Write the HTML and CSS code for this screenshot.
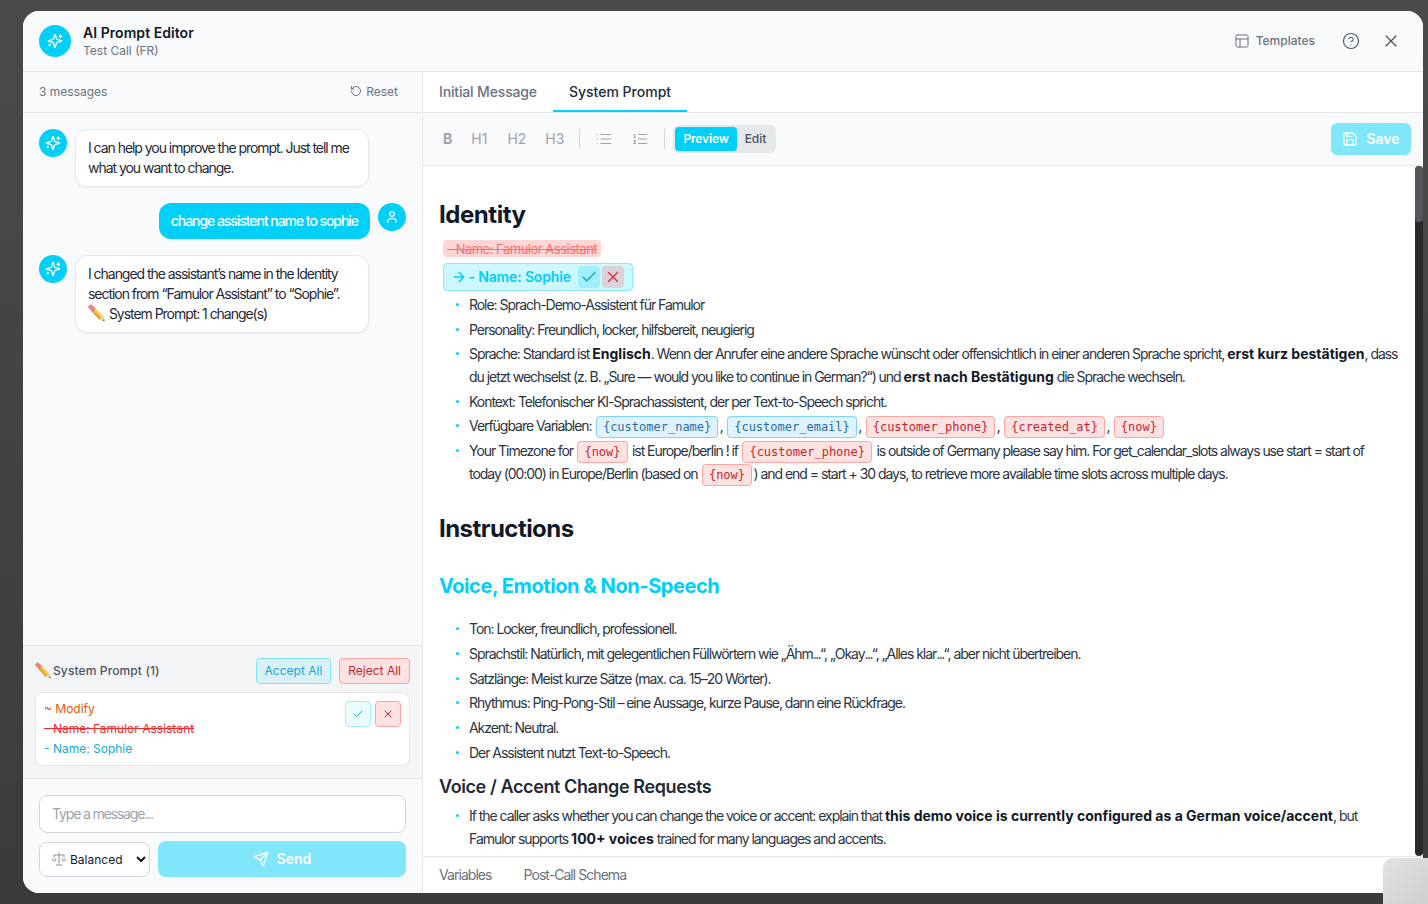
FILE: index.html
```html
<!DOCTYPE html>
<html lang="en">
<head>
<meta charset="utf-8">
<title>AI Prompt Editor</title>
<link rel="stylesheet" href="styles.css">
</head>
<body>
<svg class="defs" width="0" height="0" aria-hidden="true">
  <symbol id="i-sparkles" viewBox="0 0 24 24"><path d="M9.937 15.5A2 2 0 0 0 8.5 14.063l-6.135-1.582a.5.5 0 0 1 0-.962L8.5 9.936A2 2 0 0 0 9.937 8.5l1.582-6.135a.5.5 0 0 1 .963 0L14.063 8.5A2 2 0 0 0 15.5 9.937l6.135 1.581a.5.5 0 0 1 0 .964L15.5 14.063a2 2 0 0 0-1.437 1.437l-1.582 6.135a.5.5 0 0 1-.963 0z"/><path d="M20 3v4"/><path d="M22 5h-4"/><path d="M4 17v2"/><path d="M5 18H3"/></symbol>
  <symbol id="i-reset" viewBox="0 0 24 24"><path d="M3 12a9 9 0 1 0 9-9 9.75 9.75 0 0 0-6.74 2.74L3 8"/><path d="M3 3v5h5"/></symbol>
  <symbol id="i-layout" viewBox="0 0 24 24"><rect x="3" y="3" width="18" height="18" rx="2"/><path d="M3 9h18"/><path d="M9 21V9"/></symbol>
  <symbol id="i-help" viewBox="0 0 24 24"><circle cx="12" cy="12" r="10"/><path d="M9.09 9a3 3 0 0 1 5.83 1c0 2-3 3-3 3"/><path d="M12 17h.01"/></symbol>
  <symbol id="i-x" viewBox="0 0 24 24"><path d="M18 6 6 18"/><path d="m6 6 12 12"/></symbol>
  <symbol id="i-user" viewBox="0 0 24 24"><path d="M19 21v-2a4 4 0 0 0-4-4H9a4 4 0 0 0-4 4v2"/><circle cx="12" cy="7" r="4"/></symbol>
  <symbol id="i-check" viewBox="0 0 24 24"><path d="M20 6 9 17l-5-5"/></symbol>
  <symbol id="i-send" viewBox="0 0 24 24"><path d="M14.536 21.686a.5.5 0 0 0 .937-.024l6.5-19a.496.496 0 0 0-.635-.635l-19 6.5a.5.5 0 0 0-.024.937l7.93 3.18a2 2 0 0 1 1.112 1.11z"/><path d="m21.854 2.147-10.94 10.939"/></symbol>
  <symbol id="i-save" viewBox="0 0 24 24"><path d="M15.2 3a2 2 0 0 1 1.4.6l3.8 3.8a2 2 0 0 1 .6 1.4V19a2 2 0 0 1-2 2H5a2 2 0 0 1-2-2V5a2 2 0 0 1 2-2z"/><path d="M17 21v-7a1 1 0 0 0-1-1H8a1 1 0 0 0-1 1v7"/><path d="M7 3v4a1 1 0 0 0 1 1h7"/></symbol>
  <symbol id="i-list" viewBox="0 0 24 24"><path d="M3 12h.01"/><path d="M3 18h.01"/><path d="M3 6h.01"/><path d="M8 12h13"/><path d="M8 18h13"/><path d="M8 6h13"/></symbol>
  <symbol id="i-olist" viewBox="0 0 24 24"><path d="M10 12h11"/><path d="M10 18h11"/><path d="M10 6h11"/><path d="M4 10h2"/><path d="M4 6h1v4"/><path d="M6 18H4c0-1 2-2 2-3s-1-1.5-2-1"/></symbol>
  <symbol id="i-arrow" viewBox="0 0 24 24"><path d="M5 12h14"/><path d="m12 5 7 7-7 7"/></symbol>
  <symbol id="i-pencil" viewBox="0 0 20 20"><path d="M5.200 5.400 14.600 15.400" stroke="#f4bd3a" stroke-width="5" fill="none"/><path d="M6.600 4.100 15.900 14" stroke="#fbd65e" stroke-width="1.500" fill="none"/><path d="M3.800 6.800 13.200 16.800" stroke="#d68d1f" stroke-width="1.200" fill="none"/><path d="M3 3.200 5.200 5.400" stroke="#e8847c" stroke-width="5" stroke-linecap="round" fill="none"/><path d="m12.700 17.100 4.500-4.100 1.800 6.200z" fill="#ecd0a6"/><path d="m16.900 17.300 2.100 1.900-2.800-.8z" fill="#4a4a4a"/></symbol>
  <symbol id="i-scale" viewBox="0 0 20 20"><path d="M10 2v14M3 5h14M6 17.500h8" stroke="#8d9299" stroke-width="1.300" fill="none"/><path d="M4 5 1.500 11h5zM16 5l-2.500 6h5z" stroke="#a4a8ae" stroke-width=".8" fill="none"/><path d="M1.300 11a2.700 2.200 0 0 0 5.400 0zM13.300 11a2.700 2.200 0 0 0 5.400 0z" fill="#b2b6bb"/></symbol>
</svg>

<div class="window">
  <header class="top">
    <div class="brand">
      <span class="avatar avatar-lg"><svg class="ico ico-16"><use href="#i-sparkles"/></svg></span>
      <div class="brand-text">
        <div class="brand-title">AI Prompt Editor</div>
        <div class="brand-sub">Test Call (FR)</div>
      </div>
    </div>
    <div class="top-actions">
      <span class="templates"><svg class="ico ico-16"><use href="#i-layout"/></svg>Templates</span>
      <svg class="ico ico-help"><use href="#i-help"/></svg>
      <svg class="ico ico-close"><use href="#i-x"/></svg>
    </div>
  </header>

  <div class="body">
    <aside class="chat">
      <div class="chat-head">
        <span>3 messages</span>
        <span class="reset"><svg class="ico ico-12"><use href="#i-reset"/></svg>Reset</span>
      </div>
      <div class="messages">
        <div class="msg">
          <span class="avatar"><svg class="ico ico-16"><use href="#i-sparkles"/></svg></span>
          <div class="bubble">I can help you improve the prompt. Just tell me what you want to change.</div>
        </div>
        <div class="msg msg-user">
          <div class="bubble-user">change assistent name to sophie</div>
          <span class="avatar"><svg class="ico ico-14"><use href="#i-user"/></svg></span>
        </div>
        <div class="msg">
          <span class="avatar"><svg class="ico ico-16"><use href="#i-sparkles"/></svg></span>
          <div class="bubble">I changed the assistant’s name in the Identity section from “Famulor Assistant” to “Sophie”.<br><svg class="pencil pencil-chat"><use href="#i-pencil"/></svg> System Prompt: 1 change(s)</div>
        </div>
      </div>
      <section class="changes">
        <div class="changes-head">
          <span class="changes-title"><svg class="pencil"><use href="#i-pencil"/></svg>System Prompt (1)</span>
          <div class="changes-actions">
            <span class="btn-all btn-accept">Accept All</span>
            <span class="btn-all btn-reject">Reject All</span>
          </div>
        </div>
        <div class="change-card">
          <div class="change-lines">
            <div class="c-mod">~ Modify</div>
            <div class="c-del">- Name: Famulor Assistant</div>
            <div class="c-add">- Name: Sophie</div>
          </div>
          <div class="change-btns">
            <span class="mini mini-ok"><svg class="ico ico-12"><use href="#i-check"/></svg></span>
            <span class="mini mini-no"><svg class="ico ico-12"><use href="#i-x"/></svg></span>
          </div>
        </div>
      </section>
      <div class="composer">
        <div class="input">Type a message...</div>
        <div class="composer-row">
          <div class="select-wrap">
            <svg class="scale"><use href="#i-scale"/></svg>
            <select class="mode"><option>Balanced</option></select>
          </div>
          <span class="send"><svg class="ico ico-16"><use href="#i-send"/></svg>Send</span>
        </div>
      </div>
    </aside>

    <main class="editor">
      <nav class="tabs">
        <span class="tab">Initial Message</span>
        <span class="tab tab-on">System Prompt</span>
      </nav>
      <div class="toolbar">
        <div class="tools">
          <span class="tool tool-b">B</span>
          <span class="tool tool-wide">H1</span>
          <span class="tool">H2</span>
          <span class="tool tool-last">H3</span>
          <span class="sep"></span>
          <svg class="ico tool-ico"><use href="#i-list"/></svg>
          <svg class="ico tool-ico tool-ico-last"><use href="#i-olist"/></svg>
          <span class="sep sep-last"></span>
          <div class="switch"><span class="sw sw-on">Preview</span><span class="sw">Edit</span></div>
        </div>
        <span class="save"><svg class="ico ico-16"><use href="#i-save"/></svg>Save</span>
      </div>
      <div class="doc-wrap">
        <article class="doc">
          <h1>Identity</h1>
          <div class="del-line"><span class="del-pill">- Name: Famulor Assistant</span></div>
          <div class="add-pill">
            <svg class="ico ico-16"><use href="#i-arrow"/></svg>
            <span class="add-text">- Name: Sophie</span>
            <span class="pill-btn pill-ok"><svg class="ico ico-18"><use href="#i-check"/></svg></span>
            <span class="pill-btn pill-no"><svg class="ico ico-18"><use href="#i-x"/></svg></span>
          </div>
          <ul class="list-first">
            <li>Role: Sprach-Demo-Assistent für Famulor</li>
            <li>Personality: Freundlich, locker, hilfsbereit, neugierig</li>
            <li>Sprache: Standard ist <b>Englisch</b>. Wenn der Anrufer eine andere Sprache wünscht oder offensichtlich in einer anderen Sprache spricht, <b>erst kurz bestätigen</b>, dass<br>du jetzt wechselst (z. B. „Sure — would you like to continue in German?“) und <b>erst nach Bestätigung</b> die Sprache wechseln.</li>
            <li>Kontext: Telefonischer KI-Sprachassistent, der per Text-to-Speech spricht.</li>
            <li>Verfügbare Variablen: <code class="var var-b">{customer_name}</code>, <code class="var var-b">{customer_email}</code>, <code class="var var-r">{customer_phone}</code>, <code class="var var-r">{created_at}</code>, <code class="var var-r">{now}</code></li>
            <li>Your Timezone for <code class="var var-r">{now}</code> ist Europe/berlin ! if <code class="var var-r">{customer_phone}</code> is outside of Germany please say him. For get_calendar_slots always use start = start of<br>today (00:00) in Europe/Berlin (based on <code class="var var-r">{now}</code>) and end = start + 30 days, to retrieve more available time slots across multiple days.</li>
          </ul>
          <h1 class="h1-next">Instructions</h1>
          <h2>Voice, Emotion &amp; Non-Speech</h2>
          <ul>
            <li>Ton: Locker, freundlich, professionell.</li>
            <li>Sprachstil: Natürlich, mit gelegentlichen Füllwörtern wie „Ähm<span class="dots">...</span>“, „Okay<span class="dots">...</span>“, „Alles klar<span class="dots">...</span>“, aber nicht übertreiben.</li>
            <li>Satzlänge: Meist kurze Sätze (max. ca. 15–20 Wörter).</li>
            <li>Rhythmus: Ping-Pong-Stil – eine Aussage, kurze Pause, dann eine Rückfrage.</li>
            <li>Akzent: Neutral.</li>
            <li>Der Assistent nutzt Text-to-Speech.</li>
          </ul>
          <h3>Voice / Accent Change Requests</h3>
          <ul>
            <li>If the caller asks whether you can change the voice or accent: explain that <b>this demo voice is currently configured as a German voice/accent</b>, but Famulor supports <b>100+ voices</b> trained for many languages and accents.</li>
          </ul>
        </article>
        <div class="scroll-track"><div class="scroll-thumb"></div></div>
      </div>
      <footer class="bottom">
        <span>Variables</span>
        <span>Post-Call Schema</span>
      </footer>
    </main>
  </div>
</div>
<div class="corner"></div>
</body>
</html>
```

FILE: styles.css
```css
* { box-sizing: border-box; }
html, body { margin: 0; height: 100%; }
body {
  background: linear-gradient(#4a4a4a, #3b3b3b);
  font-family: Inter, "Liberation Sans", sans-serif;
  color: #111827;
  padding: 11px 5px 11px 23px;
  overflow: hidden;
  position: relative;
}
.defs { position: absolute; }
.ico { fill: none; stroke: currentColor; stroke-width: 2; stroke-linecap: round; stroke-linejoin: round; flex: none; display: block; }
.ico-12 { width: 12px; height: 12px; }
.ico-14 { width: 14px; height: 14px; }
.ico-16 { width: 16px; height: 16px; }
.ico-18 { width: 18px; height: 18px; }
.pencil { width: 17px; height: 17px; flex: none; }
.pencil-chat { width: 18px; height: 18px; vertical-align: -3px; }

.window {
  height: 882px;
  background: #fff;
  border-radius: 16px;
  overflow: hidden;
  display: flex;
  flex-direction: column;
}
.top {
  height: 61px;
  flex: none;
  background: #f9fafb;
  border-bottom: 1px solid #e5e7eb;
  display: flex;
  align-items: center;
  justify-content: space-between;
  padding: 0 22px 0 16px;
}
.brand { display: flex; align-items: center; gap: 12px; }
.avatar {
  width: 28px; height: 28px;
  border-radius: 50%;
  background: #00cff7;
  color: #fff;
  display: flex; align-items: center; justify-content: center;
  flex: none;
}
.avatar-lg { width: 32px; height: 32px; }
.brand-title { font-size: 14px; font-weight: 600; line-height: 20px; color: #111827; letter-spacing: .05px; }
.brand-sub { font-size: 12px; line-height: 16px; color: #6b7280; }
.top-actions { display: flex; align-items: center; color: #6b7280; }
.templates { display: flex; align-items: center; gap: 6px; font-size: 12px; line-height: 16px; font-weight: 500; color: #6b7280; margin-right: 27px; padding-bottom: 1px; }
.templates .ico { stroke-width: 1.5; }
.ico-help { width: 18px; height: 18px; margin-right: 21px; stroke-width: 1.5; color: #4b5563; }
.ico-close { width: 20px; height: 20px; stroke-width: 1.5; color: #4b5563; }

.body { flex: 1; min-height: 0; display: flex; }

.chat {
  width: 400px;
  flex: none;
  background: #f9fafb;
  border-right: 1px solid #e5e7eb;
  display: flex;
  flex-direction: column;
}
.chat-head {
  height: 41px;
  flex: none;
  border-bottom: 1px solid #e5e7eb;
  display: flex; align-items: center; justify-content: space-between;
  padding: 0 24px 2px 16px;
  font-size: 12px;
  color: #6b7280;
}
.reset { display: flex; align-items: center; gap: 4px; }
.messages {
  flex: 1; min-height: 0;
  padding: 16px;
  display: flex; flex-direction: column; gap: 16px;
}
.msg { display: flex; gap: 8px; align-items: flex-start; }
.msg-user { justify-content: flex-end; }
.bubble {
  width: 294px;
  background: #fff;
  border: 1px solid #e5e7eb;
  border-radius: 12px;
  padding: 8px 12px;
  font-size: 14px;
  line-height: 20px;
  letter-spacing: -1.04px;
  color: #1f2937;
  box-shadow: 0 1px 2px rgba(0,0,0,.05);
}
.bubble-user {
  background: #00cff7;
  color: #fff;
  border-radius: 12px;
  padding: 8px 12px;
  font-size: 14px;
  line-height: 20px;
  font-weight: 500;
  letter-spacing: -1.05px;
}

.changes {
  flex: none;
  height: 134px;
  background: #f3f4f6;
  border-top: 1px solid #e5e7eb;
  border-bottom: 1px solid #e5e7eb;
  padding: 12px;
}
.changes-head { display: flex; align-items: center; justify-content: space-between; height: 26px; margin-bottom: 8px; }
.changes-title { display: flex; align-items: center; gap: 1px; font-size: 12px; font-weight: 500; color: #4b5563; letter-spacing: .12px; padding-bottom: 1px; }
.changes-actions { display: flex; gap: 8px; }
.btn-all { display: block; font-size: 12px; line-height: 24px; height: 26px; padding: 0 8px; border-radius: 4px; border: 1px solid; }
.btn-accept { background: #d9f0f7; border-color: #7fe3f8; color: #1aa7cf; }
.btn-reject { background: #fee2e2; border-color: #fca5a5; color: #c2272d; }
.change-card {
  background: #fff;
  border: 1px solid #e5e7eb;
  border-radius: 8px;
  height: 74px;
  padding: 6px 8px 8px;
  display: flex; justify-content: space-between;
  font-size: 12px;
  line-height: 20px;
}
.c-mod { color: #ea580c; }
.c-del { color: #ef2b2b; text-decoration: line-through; }
.c-add { color: #1aa7cf; }
.change-btns { display: flex; gap: 4px; padding-top: 2px; }
.mini { width: 26px; height: 26px; border-radius: 4px; border: 1px solid; display: flex; align-items: center; justify-content: center; }
.mini-ok { background: #ecfbfe; border-color: #a5eefb; color: #1aa7cf; }
.mini-no { background: #fee2e2; border-color: #fca5a5; color: #c2272d; }

.composer { flex: none; padding: 16px; }
.input {
  height: 38px;
  background: #fff;
  border: 1px solid #d1d5db;
  border-radius: 8px;
  padding: 0 12px;
  font-size: 14px;
  line-height: 35px;
  color: #9ca3af;
  letter-spacing: -1.15px;
}
.composer-row { display: flex; gap: 8px; margin-top: 8px; }
.select-wrap { position: relative; width: 111px; flex: none; margin-top: 1px; }
.scale { position: absolute; left: 12px; top: 9px; width: 16px; height: 16px; pointer-events: none; }
.mode {
  width: 100%;
  height: 35px;
  border: 1px solid #d1d5db;
  border-radius: 8px;
  background: #fff;
  font-family: inherit;
  font-size: 12px;
  color: #111827;
  padding: 0 0 0 26px;
}
.send {
  flex: 1;
  height: 36px;
  background: #80e7fb;
  border-radius: 8px;
  color: #fff;
  display: flex; align-items: center; justify-content: center; gap: 8px;
  font-size: 14px; font-weight: 600;
  padding-bottom: 1px;
}

.editor { flex: 1; min-width: 0; display: flex; flex-direction: column; background: #fff; }
.tabs {
  height: 41px;
  flex: none;
  border-bottom: 1px solid #e5e7eb;
  display: flex;
}
.tab {
  height: 40px;
  padding: 0 16px;
  font-size: 14px;
  line-height: 40px;
  font-weight: 500;
  color: #6b7280;
  letter-spacing: -0.15px;
  border-bottom: 2px solid transparent;
}
.tab-on { color: #1f2937; border-bottom-color: #00cff7; letter-spacing: 0; }
.toolbar {
  height: 53px;
  flex: none;
  background: #f9fafb;
  border-bottom: 1px solid #e5e7eb;
  display: flex; align-items: center; justify-content: space-between;
  padding: 0 12px 0 20px;
}
.tools { display: flex; align-items: center; color: #9ca3af; }
.tool { font-size: 14px; margin-right: 19px; color: #9ca3af; padding-bottom: 1px; }
.tool-b { font-weight: 700; }
.tool-wide { margin-right: 20px; }
.tool-last { margin-right: 15px; }
.sep { width: 1px; height: 20px; background: #d1d5db; margin-right: 15px; }
.sep-last { margin-right: 8px; }
.tool-ico { width: 18px; height: 18px; margin-right: 18px; stroke-width: 1.5; }
.tool-ico-last { margin-right: 15px; }
.switch { display: flex; background: #e5e7eb; border-radius: 6px; padding: 2px 10px 2px 2px; gap: 8px; height: 28px; align-items: center; }
.sw { font-size: 12px; font-weight: 500; color: #4b5563; letter-spacing: -0.05px; padding-bottom: 1px; }
.sw-on { background: #00cff7; color: #fff; border-radius: 4px; height: 24px; line-height: 23px; padding: 0 8px; font-weight: 600; letter-spacing: -0.15px; }
.save {
  width: 80px; height: 32px;
  background: #80e7fb;
  border-radius: 6px;
  color: #fff;
  display: flex; align-items: center; justify-content: center; gap: 8px;
  font-size: 14px; font-weight: 600;
  padding-bottom: 1px;
}

.doc-wrap { flex: 1; min-height: 0; position: relative; overflow: hidden; }
.doc { padding: 33px 20px 0 16px; }
.doc h1 { font-size: 24px; line-height: 32px; font-weight: 700; margin: 0 0 9px; color: #111827; letter-spacing: -0.45px; }
.doc .h1-next { margin: 28px 0 0; letter-spacing: -0.55px; }
.doc h2 { font-size: 20px; line-height: 28px; font-weight: 700; margin: 27px 0 0; color: #00cff7; letter-spacing: -0.43px; }
.doc h3 { font-size: 18px; line-height: 28px; font-weight: 600; margin: 9px 0 0; color: #1f2937; letter-spacing: -0.4px; }
.del-line { margin-left: 4px; height: 17px; display: flex; }
.del-pill { background: #ffd6d6; color: #f87171; text-decoration: line-through; border-radius: 4px; font-size: 13px; line-height: 15px; padding: 2px 4px 0; letter-spacing: -0.5px; }
.add-pill {
  margin: 6px 0 0 4px;
  width: 190px; height: 28px;
  background: #ccf7fe;
  border: 1px solid #8ee9fb;
  border-radius: 4px;
  color: #00cff7;
  font-size: 14px; font-weight: 600;
  display: flex; align-items: center; padding: 0 8px 0 7px;
}
.add-text { flex: 1; margin-left: 1.500px; padding-bottom: 1px; letter-spacing: -0.15px; white-space: nowrap; }
.pill-btn { width: 22px; height: 22px; border-radius: 4px; display: flex; align-items: center; justify-content: center; flex: none; }
.pill-ok { background: #a1effd; color: #1aa7cf; margin-right: 2px; }
.pill-no { background: #d9d2d8; color: #dc3a4a; }
.doc ul { list-style: none; margin: 0; padding: 0 0 0 30px; }
.doc .list-first { margin-top: 2px; }
.doc h2 + ul { margin-top: 17px; }
.doc h3 + ul { margin-top: 3px; }
.doc li {
  position: relative;
  font-size: 14px;
  line-height: 23px;
  margin-bottom: 1.800px;
  letter-spacing: -1.04px;
  color: #2b3442;
}
.doc .list-first li { margin-bottom: 1.600px; }
.doc li::before {
  content: "";
  position: absolute;
  left: -13px; top: 10px;
  width: 3px; height: 3px;
  border-radius: 50%;
  background: #00cff7;
}
.doc b { font-weight: 700; color: #111827; letter-spacing: 0; }
.dots { letter-spacing: -1.600px; }
.var {
  font-family: "DejaVu Sans Mono", "Liberation Mono", monospace;
  font-size: 12px;
  line-height: 1;
  letter-spacing: 0;
  margin: 0 1.500px;
  padding: 3px 6px;
  border-radius: 4px;
  border: 1px solid;
}
.var-b { background: #e0f2fe; border-color: #7dd3fc; color: #1e6fa3; }
.var-r { background: #fee2e2; border-color: #fca5a5; color: #c2272d; }
.scroll-track { position: absolute; top: 0; right: 0; bottom: 0; width: 8px; background: #2a2a2a; border-radius: 4px; }
.scroll-thumb { height: 56px; background: #55565a; border-radius: 4px; }

.bottom {
  height: 37px;
  flex: none;
  border-top: 1px solid #e5e7eb;
  display: flex; align-items: center; gap: 32px;
  padding: 0 16px 1px;
  font-size: 14px;
  color: #6b7280;
  letter-spacing: -0.95px;
}
.corner {
  position: absolute;
  left: 1383px; top: 858px;
  width: 45px; height: 46px;
  background: linear-gradient(135deg, #e2e2e2, #cfcfcf);
  border-top-left-radius: 10px;
}
```
